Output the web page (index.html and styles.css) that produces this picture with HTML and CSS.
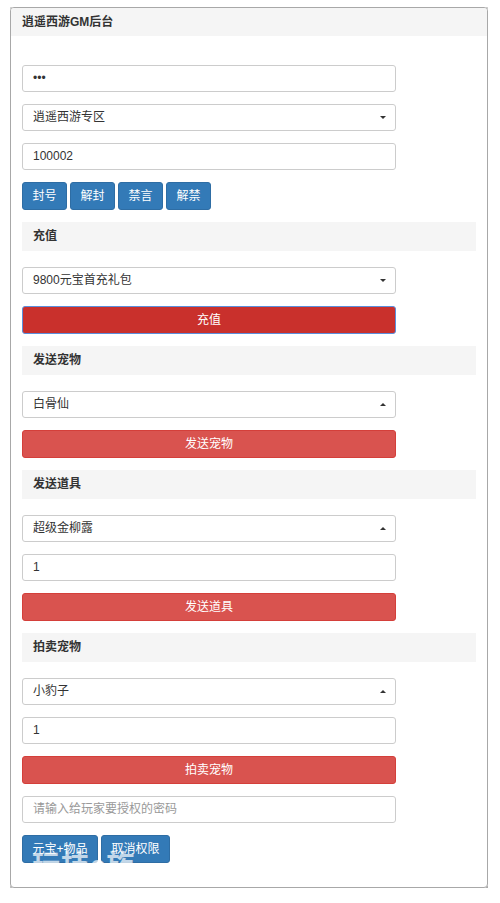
FILE: index.html
```html
<!DOCTYPE html>
<html lang="zh">
<head>
<meta charset="utf-8">
<title>逍遥西游GM后台</title>
<link rel="stylesheet" href="styles.css">
</head>
<body>
<div class="card">
  <div class="card-head">逍遥西游GM后台</div>
  <div class="card-body">
    <div class="field">•••</div>
    <div class="field select down">逍遥西游专区</div>
    <div class="field">100002</div>
    <div class="btn-row">
      <span class="btn blue">封号</span>
      <span class="btn blue">解封</span>
      <span class="btn blue">禁言</span>
      <span class="btn blue">解禁</span>
    </div>

    <div class="section">充值</div>
    <div class="field select down">9800元宝首充礼包</div>
    <div class="btn red wide active">充值</div>

    <div class="section">发送宠物</div>
    <div class="field select up">白骨仙</div>
    <div class="btn red wide">发送宠物</div>

    <div class="section">发送道具</div>
    <div class="field select up">超级金柳露</div>
    <div class="field">1</div>
    <div class="btn red wide">发送道具</div>

    <div class="section">拍卖宠物</div>
    <div class="field select up">小豹子</div>
    <div class="field">1</div>
    <div class="btn red wide">拍卖宠物</div>

    <div class="field placeholder">请输入给玩家要授权的密码</div>
    <div class="btn-row last">
      <span class="btn blue">元宝+物品</span>
      <span class="btn blue">取消权限</span>
      <span class="watermark">玩技e族</span>
    </div>
  </div>
</div>
</body>
</html>
```

FILE: styles.css
```css
* { box-sizing: border-box; }

html, body { background: #fff; }

body {
  margin: 7px 12px 0 10px;
  font-family: "Liberation Sans", "Noto Sans CJK SC", sans-serif;
  font-size: 12px;
  color: #333;
}

.card {
  width: 478px;
  height: 881px;
  border: 1px solid #a8a8a8;
  border-radius: 4px;
  box-shadow: 0 0 3px rgba(0, 0, 0, 0.6), 2px 4px 8px rgba(0, 0, 0, 0.4);
  overflow: hidden;
}

.card-head {
  height: 28px;
  line-height: 28px;
  padding-left: 11px;
  background: #f5f5f5;
  font-weight: bold;
  color: #333;
}

.card-body {
  display: flex;
  flex-direction: column;
  gap: 12px;
  padding: 29px 11px 23px 11px;
}

.field {
  position: relative;
  width: 374px;
  height: 27px;
  line-height: 25px;
  padding-left: 10px;
  border: 1px solid #ccc;
  border-radius: 3px;
  background: #fff;
  color: #333;
}

.field.placeholder { color: #999; }

.select::after {
  content: "";
  position: absolute;
  right: 9px;
  top: 11px;
  border-left: 3px solid transparent;
  border-right: 3px solid transparent;
}

.select.down::after { border-top: 3px solid #333; }
.select.up::after { border-bottom: 3px solid #333; }

.btn-row {
  position: relative;
  display: flex;
  gap: 3px;
}

.btn {
  display: block;
  height: 28px;
  line-height: 26px;
  padding: 0 9.5px;
  border: 1px solid;
  border-radius: 3px;
  color: #fff;
  text-align: center;
}

.btn.blue {
  background: #337ab7;
  border-color: #2e6da4;
}

.btn.red {
  background: #d9534f;
  border-color: #d43f3a;
}

.btn.red.active {
  background: #c9302c;
  border-color: #5b8fdc;
}

.btn.wide { width: 374px; }

.section {
  height: 29px;
  line-height: 29px;
  padding-left: 11px;
  background: #f5f5f5;
  font-weight: bold;
  margin-bottom: 4px;
}

.btn-row.last { height: 28px; }

.watermark {
  position: absolute;
  left: 10px;
  top: 15px;
  font-size: 28px;
  font-weight: bold;
  line-height: 32px;
  color: #fff;
  opacity: 0.7;
  pointer-events: none;
  letter-spacing: 1px;
}
```
